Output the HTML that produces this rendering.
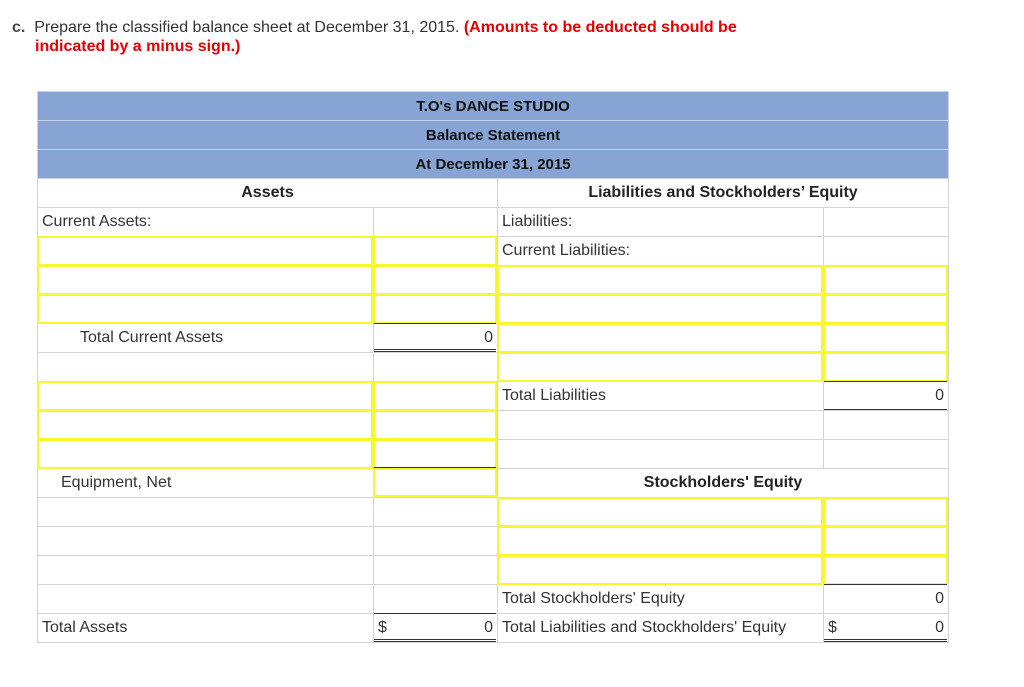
<!DOCTYPE html>
<html><head><meta charset="utf-8"><style>
body{margin:0;background:#fff;font-family:"Liberation Sans",Arial,sans-serif;color:#333;width:1024px;height:687px;position:relative;overflow:hidden}
.t{position:absolute;font-size:16px;white-space:nowrap}
table{position:absolute;left:37px;top:91px;border-collapse:collapse;table-layout:fixed;width:911px}
td{height:28px;border:1px solid #d4d4d4;padding:0 4px;font-size:16px;color:#333;white-space:nowrap;box-sizing:border-box}
td.h{background:#87a4d4;border:1px solid #c9d3e8;text-align:center;font-weight:bold;font-size:15px;color:#111}
.b{font-weight:bold;text-align:center;color:#222}
.r{text-align:right}
.y{position:absolute;border:2px solid #f7f72e;box-sizing:border-box}
.dl{position:absolute;height:1px;background:#333}
</style></head><body>
<div class="t" style="left:12px;top:19px"><b style="color:#444">c.</b>&nbsp; Prepare the classified balance sheet at December 31, 2015. <b style="color:#e80000">(Amounts to be deducted should be</b></div>
<div class="t" style="left:35px;top:38px;color:#e80000;font-weight:bold">indicated by a minus sign.)</div>
<table>
<colgroup><col style="width:336px"><col style="width:124px"><col style="width:326px"><col style="width:125px"></colgroup>
<tr style="height:29px"><td class="h" colspan="4">T.O's DANCE STUDIO</td></tr>
<tr style="height:29px"><td class="h" colspan="4">Balance Statement</td></tr>
<tr style="height:29px"><td class="h" colspan="4">At December 31, 2015</td></tr>
<tr style="height:29px"><td colspan="2" class="b">Assets</td><td colspan="2" class="b">Liabilities and Stockholders’ Equity</td></tr>
<tr style="height:29px"><td>Current Assets:</td><td></td><td>Liabilities:</td><td></td></tr>
<tr style="height:29px"><td></td><td></td><td>Current Liabilities:</td><td></td></tr>
<tr style="height:29px"><td></td><td></td><td></td><td></td></tr>
<tr style="height:29px"><td></td><td></td><td></td><td></td></tr>
<tr style="height:29px"><td style="padding-left:42px">Total Current Assets</td><td class="r">0</td><td></td><td></td></tr>
<tr style="height:29px"><td></td><td></td><td></td><td></td></tr>
<tr style="height:29px"><td></td><td></td><td>Total Liabilities</td><td class="r">0</td></tr>
<tr style="height:29px"><td></td><td></td><td></td><td></td></tr>
<tr style="height:29px"><td></td><td></td><td></td><td></td></tr>
<tr style="height:29px"><td style="padding-left:23px">Equipment, Net</td><td></td><td colspan="2" class="b">Stockholders' Equity</td></tr>
<tr style="height:29px"><td></td><td></td><td></td><td></td></tr>
<tr style="height:29px"><td></td><td></td><td></td><td></td></tr>
<tr style="height:29px"><td></td><td></td><td></td><td></td></tr>
<tr style="height:29px"><td></td><td></td><td>Total Stockholders' Equity</td><td class="r">0</td></tr>
<tr style="height:29px"><td>Total Assets</td><td class="r"><span style="float:left">$</span>0</td><td>Total Liabilities and Stockholders' Equity</td><td class="r"><span style="float:left">$</span>0</td></tr>
</table>
<!-- yellow left -->
<div class="y" style="left:37px;top:236px;width:336px;height:30px"></div>
<div class="y" style="left:373px;top:236px;width:124px;height:30px"></div>
<div class="y" style="left:37px;top:265px;width:336px;height:30px"></div>
<div class="y" style="left:373px;top:265px;width:124px;height:30px"></div>
<div class="y" style="left:37px;top:294px;width:336px;height:30px"></div>
<div class="y" style="left:373px;top:294px;width:124px;height:30px"></div>
<div class="y" style="left:37px;top:381px;width:336px;height:30px"></div>
<div class="y" style="left:373px;top:381px;width:124px;height:30px"></div>
<div class="y" style="left:37px;top:410px;width:336px;height:30px"></div>
<div class="y" style="left:373px;top:410px;width:124px;height:30px"></div>
<div class="y" style="left:37px;top:439px;width:336px;height:30px"></div>
<div class="y" style="left:373px;top:439px;width:124px;height:30px"></div>
<div class="y" style="left:373px;top:468px;width:124px;height:29px"></div>
<!-- yellow right -->
<div class="y" style="left:497px;top:265px;width:326px;height:30px"></div>
<div class="y" style="left:823px;top:265px;width:125px;height:30px"></div>
<div class="y" style="left:497px;top:294px;width:326px;height:30px"></div>
<div class="y" style="left:823px;top:294px;width:125px;height:30px"></div>
<div class="y" style="left:497px;top:323px;width:326px;height:30px"></div>
<div class="y" style="left:823px;top:323px;width:125px;height:30px"></div>
<div class="y" style="left:497px;top:352px;width:326px;height:30px"></div>
<div class="y" style="left:823px;top:352px;width:125px;height:30px"></div>
<div class="y" style="left:497px;top:497px;width:326px;height:30px"></div>
<div class="y" style="left:823px;top:497px;width:125px;height:30px"></div>
<div class="y" style="left:497px;top:526px;width:326px;height:30px"></div>
<div class="y" style="left:823px;top:526px;width:125px;height:30px"></div>
<div class="y" style="left:497px;top:555px;width:326px;height:30px"></div>
<div class="y" style="left:823px;top:555px;width:125px;height:30px"></div>
<!-- dark lines -->
<div class="dl" style="left:374px;top:323px;width:122px"></div>
<div class="dl" style="left:374px;top:349px;width:122px"></div>
<div class="dl" style="left:374px;top:351px;width:122px"></div>
<div class="dl" style="left:824px;top:381px;width:123px"></div>
<div class="dl" style="left:824px;top:409px;width:123px"></div>
<div class="dl" style="left:374px;top:467px;width:122px"></div>
<div class="dl" style="left:824px;top:584px;width:123px"></div>
<div class="dl" style="left:374px;top:613px;width:122px"></div>
<div class="dl" style="left:374px;top:639px;width:122px"></div>
<div class="dl" style="left:374px;top:641px;width:122px"></div>
<div class="dl" style="left:824px;top:639px;width:123px"></div>
<div class="dl" style="left:824px;top:641px;width:123px"></div>
</body></html>
